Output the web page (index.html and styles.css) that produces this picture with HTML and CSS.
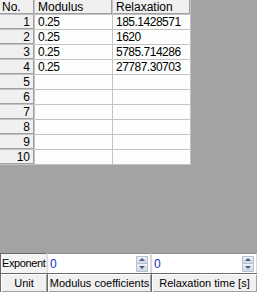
FILE: index.html
```html
<!DOCTYPE html>
<html>
<head>
<meta charset="utf-8">
<link rel="stylesheet" href="styles.css">
</head>
<body>
<div class="app">
  <div class="workspace">
    <div class="grid">
      <div class="cell fixed hdr left">No.</div>
      <div class="cell fixed hdr">Modulus</div>
      <div class="cell fixed hdr">Relaxation</div>

      <div class="cell fixed num">1</div><div class="cell">0.25</div><div class="cell">185.1428571</div>
      <div class="cell fixed num">2</div><div class="cell">0.25</div><div class="cell">1620</div>
      <div class="cell fixed num">3</div><div class="cell">0.25</div><div class="cell">5785.714286</div>
      <div class="cell fixed num">4</div><div class="cell">0.25</div><div class="cell">27787.30703</div>
      <div class="cell fixed num">5</div><div class="cell"></div><div class="cell"></div>
      <div class="cell fixed num">6</div><div class="cell"></div><div class="cell"></div>
      <div class="cell fixed num">7</div><div class="cell"></div><div class="cell"></div>
      <div class="cell fixed num">8</div><div class="cell"></div><div class="cell"></div>
      <div class="cell fixed num">9</div><div class="cell"></div><div class="cell"></div>
      <div class="cell fixed num">10</div><div class="cell"></div><div class="cell"></div>
    </div>
  </div>
  <div class="panel">
    <div class="label">Exponent</div>
    <div class="edit">
      <span class="value">0</span>
      <span class="spin"><span class="btn up"></span><span class="btn down"></span></span>
    </div>
    <div class="edit">
      <span class="value">0</span>
      <span class="spin"><span class="btn up"></span><span class="btn down"></span></span>
    </div>
    <div class="head">Unit</div>
    <div class="head">Modulus coefficients</div>
    <div class="head">Relaxation time [s]</div>
  </div>
</div>
</body>
</html>
```
FILE: styles.css
```css
html, body {
  margin: 0;
  padding: 0;
}
body {
  background: #a4a2a4;
  width: 257px;
  height: 292px;
  overflow: hidden;
}
.app {
  display: flex;
  flex-direction: column;
  height: 292px;
}
.workspace {
  flex: 1;
  background: #a4a2a4;
}
.grid {
  display: grid;
  grid-template-columns: 35px 78px 78px;
  grid-auto-rows: 15px;
  width: 191px;
  font-family: "Liberation Sans", Arial, sans-serif;
  font-size: 12px;
  line-height: 14px;
  color: #000;
  letter-spacing: -0.5px;
}
.cell {
  box-sizing: border-box;
  background: #fcfefc;
  border-right: 1px solid #c4c2c4;
  border-bottom: 1px solid #c4c2c4;
  padding-left: 3px;
  white-space: nowrap;
  overflow: hidden;
}
.fixed {
  background: #f0f0f0;
  box-shadow: inset -1px -1px 0 #a0a0a0;
}
.hdr {
  letter-spacing: 0;
}
.num {
  text-align: right;
  padding-left: 0;
  padding-right: 4px;
  letter-spacing: 0;
}
.hdr.left {
  padding-left: 2px;
}
.panel {
  display: grid;
  grid-template-columns: 47px 104px 1fr;
  grid-template-rows: 20px 19px;
  font-family: "Liberation Sans", Arial, sans-serif;
  font-size: 11px;
  background: #f0f0f0;
}
.label {
  box-sizing: border-box;
  border-top: 1px solid #6a6a6a;
  border-left: 1px solid #6a6a6a;
  border-right: 1px solid #e8e8e8;
  background: #f4f4f4;
  color: #000;
  line-height: 18px;
  padding-left: 1px;
  letter-spacing: -0.4px;
}
.edit {
  box-sizing: border-box;
  display: flex;
  align-items: center;
  background: #fff;
  border-top: 1px solid #8c8c8c;
  border-left: 1px solid #d8d8d8;
  border-right: 1px solid #d8d8d8;
  padding-left: 2px;
  padding-right: 2px;
}
.value {
  flex: 1;
  color: #0a32d0;
  font-size: 12px;
}
.spin {
  display: flex;
  flex-direction: column;
  width: 12px;
  height: 16px;
}
.btn {
  flex: 1;
  display: flex;
  align-items: center;
  justify-content: center;
  background: linear-gradient(#eef2f8, #cdd6e4);
  border: 1px solid #b8c2d2;
  box-sizing: border-box;
}
.btn.down {
  border-top: none;
}
.btn::after {
  content: "";
  width: 0;
  height: 0;
  border-left: 3px solid transparent;
  border-right: 3px solid transparent;
}
.btn.up::after {
  border-bottom: 3px solid #4b5c8c;
}
.btn.down::after {
  border-top: 3px solid #4b5c8c;
}
.head {
  box-sizing: border-box;
  background: #f0f0f0;
  border-top: 1px solid #6a6a6a;
  border-left: 1px solid #6a6a6a;
  box-shadow: inset 1px 1px 0 #ffffff, inset -1px -1px 0 #a0a0a0;
  text-align: center;
  line-height: 18px;
  white-space: nowrap;
  overflow: hidden;
  color: #000;
}
```
